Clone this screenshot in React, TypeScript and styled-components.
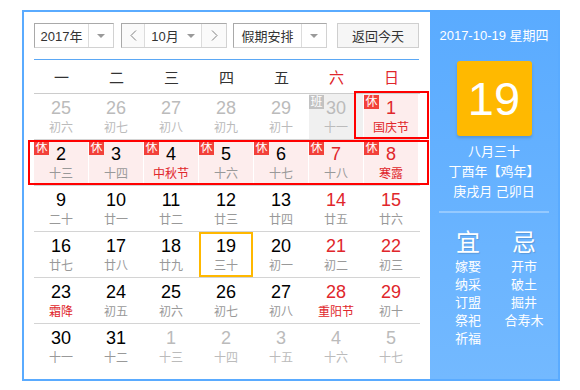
import React from "react";
import styled, { createGlobalStyle } from "styled-components";

const GlobalStyle = createGlobalStyle`
  body {
    margin: 0;
    background: #fff;
    font-family: "Liberation Sans", Arial, "Noto Sans CJK SC", sans-serif;
  }
`;

const Wrapper = styled.div`
  margin: 10px 0 0 22px;
  width: 538px;
  height: 371px;
  box-sizing: border-box;
  border: 2px solid #5aabff;
  display: flex;
`;

const Main = styled.div`
  width: 406px;
  box-sizing: border-box;
  padding: 11px 10px 0 10px;
`;

const Toolbar = styled.div`
  display: flex;
  height: 25px;
`;

const SelectBox = styled.div<{ $w: number; $ml?: number }>`
  width: ${(p) => p.$w}px;
  margin-left: ${(p) => p.$ml ?? 0}px;
  height: 25px;
  box-sizing: border-box;
  display: flex;
  border: 1px solid;
  border-color: #a9a9a9 #d2d2d2 #d2d2d2 #a9a9a9;
  background: #fff;
`;

const SelectLabel = styled.div`
  flex: 1;
  display: flex;
  align-items: center;
  justify-content: center;
  font-size: 13px;
  color: #333;
`;

const ArrowPart = styled.div`
  width: 24px;
  border-left: 1px solid #dcdcdc;
  display: flex;
  align-items: center;
  justify-content: center;
`;

const Caret = styled.span<{ $ml?: number }>`
  display: inline-block;
  width: 0;
  height: 0;
  margin-left: ${(p) => p.$ml ?? 0}px;
  border-left: 4px solid transparent;
  border-right: 4px solid transparent;
  border-top: 4px solid #9a9a9a;
`;

const NavButton = styled.div<{ $side: "l" | "r"; $w: number }>`
  width: ${(p) => p.$w}px;
  display: flex;
  align-items: center;
  justify-content: center;
  background: #fafafa;
  ${(p) => (p.$side === "l" ? "border-right: 1px solid #dcdcdc;" : "border-left: 1px solid #dcdcdc;")}
`;

const MonthLabel = styled.div`
  flex: 1;
  display: flex;
  align-items: center;
  justify-content: center;
  font-size: 13px;
  color: #333;
`;

const TodayButton = styled.div`
  width: 82px;
  margin-left: 10px;
  height: 25px;
  box-sizing: border-box;
  border: 1px solid #cfcfcf;
  background: #f6f6f6;
  display: flex;
  align-items: center;
  justify-content: center;
  font-size: 13px;
  color: #333;
`;

const HeaderLine = styled.div`
  margin-top: 11px;
  height: 1px;
  width: 385px;
  background: #5ba8f5;
`;

const WeekHeader = styled.div`
  display: grid;
  grid-template-columns: repeat(7, 55px);
  height: 34px;
  box-sizing: border-box;
  border-bottom: 1px solid #cccccc;
  align-items: center;
`;

const WeekName = styled.div<{ $red?: boolean }>`
  text-align: center;
  font-size: 15px;
  color: ${(p) => (p.$red ? "#e0262b" : "#333")};
`;

const Row = styled.div<{ $last?: boolean }>`
  position: relative;
  display: grid;
  grid-template-columns: repeat(7, 55px);
  height: 46px;
  box-sizing: border-box;
  border-bottom: 1px solid ${(p) => (p.$last ? "transparent" : "#d4d4d4")};
`;

const Cell = styled.div<{ $bg?: string; $today?: boolean }>`
  position: relative;
  box-sizing: border-box;
  border-right: 1px solid transparent;
  background: ${(p) => p.$bg ?? "transparent"};
  background-clip: padding-box;
  padding-top: 4px;
  text-align: center;
  box-shadow: ${(p) => (p.$today ? "inset 0 0 0 2px #ffb800" : "none")};
`;

const DayNum = styled.div<{ $color: string }>`
  font-size: 18px;
  line-height: 20px;
  color: ${(p) => p.$color};
`;

const Lunar = styled.div<{ $color: string }>`
  font-size: 12px;
  line-height: 14px;
  margin-top: 3px;
  color: ${(p) => p.$color};
`;

const Badge = styled.span<{ $kind: "休" | "班" }>`
  position: absolute;
  top: 1px;
  left: 0;
  width: 15px;
  height: 14px;
  line-height: 14px;
  font-size: 12px;
  text-align: center;
  color: #fff;
  background: ${(p) => (p.$kind === "休" ? "#f2413a" : "#c2c2c2")};
`;

const HolidayBox = styled.div<{ $l: number; $t: number; $w: number; $h: number }>`
  position: absolute;
  left: ${(p) => p.$l}px;
  top: ${(p) => p.$t}px;
  width: ${(p) => p.$w}px;
  height: ${(p) => p.$h}px;
  box-sizing: border-box;
  border: 2px solid #ff0000;
  pointer-events: none;
  z-index: 2;
`;

const Side = styled.div`
  width: 128px;
  background: linear-gradient(#5aabff, #73b9ff);
  color: #fff;
  display: flex;
  flex-direction: column;
  align-items: center;
`;

const DateLine = styled.div`
  margin-top: 15px;
  font-size: 13px;
  line-height: 18px;
  white-space: nowrap;
`;

const BigDay = styled.div`
  margin-top: 16px;
  width: 75px;
  height: 75px;
  background: #ffb900;
  border-radius: 3px;
  box-shadow: 0 2px 3px rgba(0, 0, 0, 0.15);
  font-size: 47px;
  line-height: 75px;
  text-align: center;
`;

const LunarInfo = styled.div`
  margin-top: 6px;
  font-size: 13px;
  line-height: 20px;
  text-align: center;
  white-space: nowrap;
`;

const Divider = styled.div`
  margin-top: 9px;
  width: 110px;
  height: 2px;
  background: rgba(255, 255, 255, 0.3);
`;

const YiJi = styled.div`
  margin: 15px 0 0 4px;
  width: 112px;
  display: grid;
  grid-template-columns: 56px 56px;
  text-align: center;
  font-size: 24px;
  line-height: 30px;
  text-shadow: 1px 1px 1px rgba(0, 0, 0, 0.15);
`;

const Lists = styled.div`
  margin-left: 4px;
  width: 112px;
  display: grid;
  grid-template-columns: 56px 56px;
  text-align: center;
  font-size: 13px;
  line-height: 18px;
`;

const ListCol = styled.div`
  display: flex;
  flex-direction: column;
  white-space: nowrap;
`;

type Day = {
  d: number;
  l: string;
  other?: boolean;
  fest?: boolean;
  badge?: "休" | "班";
  bg?: string;
  today?: boolean;
};

const PINK = "#fdeded";

const rows: Day[][] = [
  [
    { d: 25, l: "初六", other: true },
    { d: 26, l: "初七", other: true },
    { d: 27, l: "初八", other: true },
    { d: 28, l: "初九", other: true },
    { d: 29, l: "初十", other: true },
    { d: 30, l: "十一", other: true, badge: "班", bg: "#f0f0f0" },
    { d: 1, l: "国庆节", fest: true, badge: "休", bg: PINK },
  ],
  [
    { d: 2, l: "十三", badge: "休", bg: PINK },
    { d: 3, l: "十四", badge: "休", bg: PINK },
    { d: 4, l: "中秋节", fest: true, badge: "休", bg: PINK },
    { d: 5, l: "十六", badge: "休", bg: PINK },
    { d: 6, l: "十七", badge: "休", bg: PINK },
    { d: 7, l: "十八", badge: "休", bg: PINK },
    { d: 8, l: "寒露", fest: true, badge: "休", bg: PINK },
  ],
  [
    { d: 9, l: "二十" },
    { d: 10, l: "廿一" },
    { d: 11, l: "廿二" },
    { d: 12, l: "廿三" },
    { d: 13, l: "廿四" },
    { d: 14, l: "廿五" },
    { d: 15, l: "廿六" },
  ],
  [
    { d: 16, l: "廿七" },
    { d: 17, l: "廿八" },
    { d: 18, l: "廿九" },
    { d: 19, l: "三十", today: true },
    { d: 20, l: "初一" },
    { d: 21, l: "初二" },
    { d: 22, l: "初三" },
  ],
  [
    { d: 23, l: "霜降", fest: true },
    { d: 24, l: "初五" },
    { d: 25, l: "初六" },
    { d: 26, l: "初七" },
    { d: 27, l: "初八" },
    { d: 28, l: "重阳节", fest: true },
    { d: 29, l: "初十" },
  ],
  [
    { d: 30, l: "十一" },
    { d: 31, l: "十二" },
    { d: 1, l: "十三", other: true },
    { d: 2, l: "十四", other: true },
    { d: 3, l: "十五", other: true },
    { d: 4, l: "十六", other: true },
    { d: 5, l: "十七", other: true },
  ],
];

const holidayBoxes: Record<number, { l: number; t: number; w: number; h: number }> = {
  0: { l: 320, t: -3, w: 75, h: 48 },
  1: { l: -6, t: 0, w: 401, h: 45 },
};

const RED = "#e0262b";
const weekNames = ["一", "二", "三", "四", "五", "六", "日"];

const Chevron = ({ dir }: { dir: "l" | "r" }) => (
  <svg width="7" height="11" viewBox="0 0 7 11">
    <polyline
      points={dir === "l" ? "6,0.5 1,5.5 6,10.5" : "1,0.5 6,5.5 1,10.5"}
      fill="none"
      stroke="#808080"
      strokeWidth="1"
    />
  </svg>
);

export default function App() {
  return (
    <>
      <GlobalStyle />
      <Wrapper>
        <Main>
          <Toolbar>
            <SelectBox $w={80}>
              <SelectLabel>2017年</SelectLabel>
              <ArrowPart>
                <Caret />
              </ArrowPart>
            </SelectBox>
            <SelectBox $w={106} $ml={7}>
              <NavButton $side="l" $w={22}>
                <Chevron dir="l" />
              </NavButton>
              <MonthLabel>
                10月
                <Caret $ml={8} />
              </MonthLabel>
              <NavButton $side="r" $w={24}>
                <Chevron dir="r" />
              </NavButton>
            </SelectBox>
            <SelectBox $w={94} $ml={6}>
              <SelectLabel>假期安排</SelectLabel>
              <ArrowPart>
                <Caret />
              </ArrowPart>
            </SelectBox>
            <TodayButton>返回今天</TodayButton>
          </Toolbar>
          <HeaderLine />
          <WeekHeader>
            {weekNames.map((n, i) => (
              <WeekName key={n} $red={i >= 5}>
                {n}
              </WeekName>
            ))}
          </WeekHeader>
          {rows.map((row, ri) => {
            const box = holidayBoxes[ri];
            return (
              <Row key={ri} $last={ri === rows.length - 1}>
                {row.map((day, ci) => {
                  const numColor = day.other ? "#bbbbbb" : ci >= 5 ? RED : "#000";
                  const lunarColor = day.other ? "#bbbbbb" : day.fest ? RED : "#999";
                  return (
                    <Cell key={ci} $bg={day.bg} $today={day.today}>
                      {day.badge && <Badge $kind={day.badge}>{day.badge}</Badge>}
                      <DayNum $color={numColor}>{day.d}</DayNum>
                      <Lunar $color={lunarColor}>{day.l}</Lunar>
                    </Cell>
                  );
                })}
                {box && <HolidayBox $l={box.l} $t={box.t} $w={box.w} $h={box.h} />}
              </Row>
            );
          })}
        </Main>
        <Side>
          <DateLine>2017-10-19 星期四</DateLine>
          <BigDay>19</BigDay>
          <LunarInfo>
            <div>八月三十</div>
            <div>丁酉年【鸡年】</div>
            <div>庚戌月 己卯日</div>
          </LunarInfo>
          <Divider />
          <YiJi>
            <div>宜</div>
            <div>忌</div>
          </YiJi>
          <Lists>
            <ListCol>
              <span>嫁娶</span>
              <span>纳采</span>
              <span>订盟</span>
              <span>祭祀</span>
              <span>祈福</span>
            </ListCol>
            <ListCol>
              <span>开市</span>
              <span>破土</span>
              <span>掘井</span>
              <span>合寿木</span>
            </ListCol>
          </Lists>
        </Side>
      </Wrapper>
    </>
  );
}
